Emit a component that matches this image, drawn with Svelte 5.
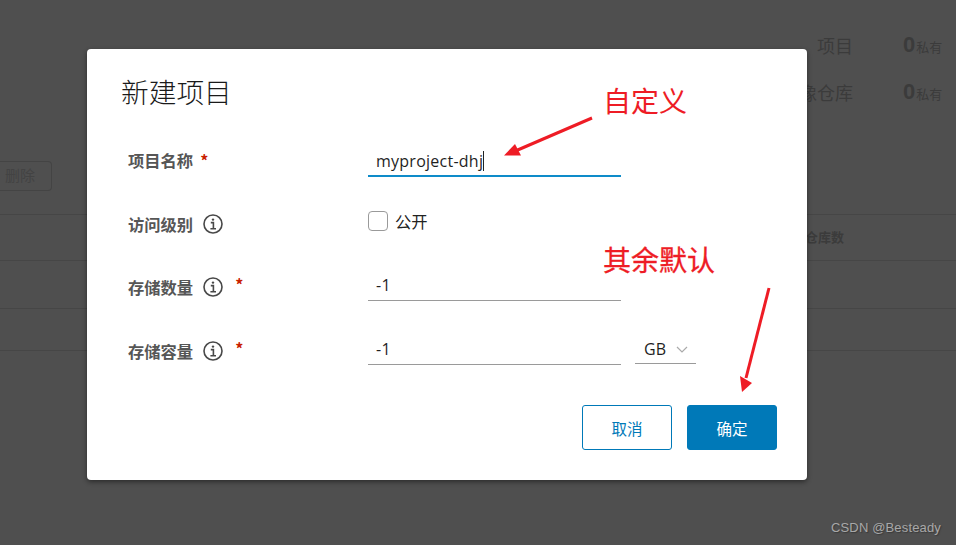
<script>
	const fields = [
		{ label: '存储数量', value: '-1' },
		{ label: '存储容量', value: '-1', unit: 'GB' }
	];
</script>

{#snippet info()}
	<svg class="info" viewBox="0 0 20 20" aria-hidden="true">
		<circle cx="10" cy="10" r="9" />
		<path d="M7.8 8.6H10.4V14.6M7.4 14.8H13" />
		<circle class="dot" cx="10" cy="5.6" r="1.2" />
	</svg>
{/snippet}

<div class="page">
	<div class="stats">
		<div class="stat"><span class="stat-name">项目</span><span class="stat-num">0<small>私有</small></span></div>
		<div class="stat"><span class="stat-name">镜像仓库</span><span class="stat-num">0<small>私有</small></span></div>
	</div>
	<div class="toolbar"><span class="ghost">删除</span></div>
	<div class="table">
		<div class="row head"><span>镜像仓库数</span></div>
		<div class="row tall"></div>
		<div class="row"></div>
	</div>
</div>

<div class="modal">
	<h2>新建项目</h2>
	<form class="form">
		<div class="field first">
			<div class="label">项目名称<span class="req">*</span></div>
			<div class="input active">myproject-dhj<i class="caret"></i></div>
		</div>
		<div class="field check-row">
			<div class="label">访问级别{@render info()}</div>
			<label class="check"><span class="box"></span>公开</label>
		</div>
		{#each fields as f}
			<div class="field">
				<div class="label">{f.label}{@render info()}<span class="req far">*</span></div>
				<div class="input">{f.value}</div>
				{#if f.unit}
					<div class="select">
						{f.unit}
						<svg viewBox="0 0 12 7" aria-hidden="true"><path d="M1 1L6 6L11 1" /></svg>
					</div>
				{/if}
			</div>
		{/each}
	</form>
	<div class="actions">
		<button type="button" class="btn outline">取消</button>
		<button type="button" class="btn solid">确定</button>
	</div>
</div>

<span class="note note-a">自定义</span>
<span class="note note-b">其余默认</span>
<svg class="arrows" viewBox="0 0 956 545" aria-hidden="true">
	<path class="shaft" d="M592 118L513 152" />
	<path class="head-tip" d="M504 155.5L515 144L521 155.5Z" />
	<path class="shaft" d="M769 288L746 378" />
	<path class="head-tip" d="M742 392L740 376L752 383Z" />
</svg>
<span class="mark">CSDN @Besteady</span>

<style>
	:global(body) {
		margin: 0;
		background: #4f4f4f;
		overflow: hidden;
	}

	.page {
		height: 545px;
		overflow: hidden;
		background: #4f4f4f;
		color: #3b3b3b;
		font-family: 'Liberation Sans', 'Noto Sans CJK SC', sans-serif;
	}

	.stats {
		display: flex;
		flex-direction: column;
		align-items: flex-end;
		gap: 19px;
		padding: 33px 14px 0 0;
	}

	.stat {
		display: flex;
		align-items: center;
		height: 28px;
		gap: 50px;
	}

	.stat-name {
		font-size: 18px;
		line-height: 28px;
	}

	.stat-num {
		display: flex;
		align-items: baseline;
		width: 39px;
		padding-bottom: 5px;
		font-size: 22px;
		font-weight: 700;
		white-space: nowrap;
	}

	.stat-num small {
		margin-left: 1px;
		font-size: 13px;
		font-weight: 400;
	}

	.toolbar {
		display: flex;
		margin-top: 53px;
	}

	.ghost {
		box-sizing: border-box;
		width: 52px;
		height: 30px;
		padding-left: 5px;
		border: 1px solid #444;
		border-left: 0;
		border-radius: 0 4px 4px 0;
		font-size: 15px;
		line-height: 28px;
		color: #434343;
	}

	.table {
		margin-top: 23px;
	}

	.row {
		box-sizing: border-box;
		height: 46px;
		border-top: 1px solid #464646;
		display: flex;
		align-items: center;
		justify-content: flex-end;
		padding-right: 112px;
		font-size: 13px;
		font-weight: 700;
	}

	.row.head {
		padding-bottom: 3px;
	}

	.row.tall {
		height: 48px;
	}

	.row:last-child {
		height: 43px;
		border-bottom: 1px solid #464646;
	}

	.modal {
		position: absolute;
		left: 87px;
		top: 49px;
		box-sizing: border-box;
		width: 720px;
		height: 431px;
		padding: 22px 30px 30px 34px;
		background: #fff;
		border-radius: 4px;
		box-shadow: 0 2px 5px rgba(0, 0, 0, 0.45);
		font-family: 'Noto Sans CJK SC', sans-serif;
		color: #333;
	}

	h2 {
		margin: 0;
		font-size: 27.7px;
		line-height: 40px;
		font-weight: 300;
		color: #1a1a1a;
	}

	.form {
		display: flex;
		flex-direction: column;
		margin-top: 26px;
		padding-left: 7px;
	}

	.field {
		display: flex;
		align-items: flex-end;
		height: 40px;
		margin-top: 24px;
	}

	.field.first {
		margin-top: 0;
	}

	.field.check-row {
		box-sizing: border-box;
		align-items: flex-start;
		margin-top: 20px;
		padding-top: 14px;
	}

	.label {
		display: flex;
		align-items: center;
		width: 240px;
		height: 28px;
		font-size: 16.3px;
		font-weight: 700;
		color: #565656;
	}

	.first .label {
		height: 34px;
	}

	.check-row .label {
		height: 26px;
	}

	.req {
		margin-left: 7px;
		color: #c92100;
		font-size: 16px;
		font-weight: 700;
		transform: translateY(-3px);
	}

	.first .req {
		transform: none;
	}

	.req.far {
		margin-left: 12px;
	}

	.info {
		width: 20px;
		height: 20px;
		margin-left: 10px;
		flex: none;
	}

	.info circle {
		fill: none;
		stroke: #484848;
		stroke-width: 1.6;
	}

	.info circle.dot {
		fill: #484848;
		stroke: none;
	}

	.info path {
		fill: none;
		stroke: #484848;
		stroke-width: 1.6;
	}

	.input {
		box-sizing: border-box;
		display: flex;
		align-items: center;
		width: 253px;
		height: 30px;
		padding-left: 8px;
		padding-bottom: 1px;
		border-bottom: 1px solid #9a9a9a;
		font-family: 'Open Sans', sans-serif;
		font-size: 16px;
		letter-spacing: 0.25px;
		color: #1f1f1f;
	}

	.input.active {
		padding-bottom: 0;
		border-bottom: 2px solid #0e8bc9;
	}

	.caret {
		width: 1px;
		height: 20px;
		background: #222;
	}

	.check {
		display: flex;
		align-items: center;
		gap: 7px;
		height: 20px;
		font-size: 16.3px;
		color: #222;
	}

	.box {
		box-sizing: border-box;
		width: 20px;
		height: 20px;
		border: 1px solid #9a9a9a;
		border-radius: 4px;
	}

	.select {
		box-sizing: border-box;
		display: flex;
		align-items: center;
		gap: 10px;
		width: 61px;
		height: 29px;
		margin-left: 14px;
		margin-bottom: 1px;
		padding-left: 9px;
		border-bottom: 1px solid #9a9a9a;
		font-family: 'Open Sans', sans-serif;
		font-size: 16px;
		color: #1f1f1f;
	}

	.select svg {
		width: 12px;
		height: 7px;
		fill: none;
		stroke: #aaa;
		stroke-width: 1.2;
	}

	.actions {
		display: flex;
		justify-content: flex-end;
		gap: 15px;
		margin-top: 40px;
	}

	.btn {
		box-sizing: border-box;
		width: 90px;
		height: 45px;
		border-radius: 3px;
		font-family: 'Noto Sans CJK SC', sans-serif;
		font-size: 15.5px;
		padding: 0;
	}

	.outline {
		background: #fff;
		border: 1px solid #0079b8;
		color: #0079b8;
	}

	.solid {
		background: #0079b8;
		border: 1px solid #0079b8;
		color: #fff;
	}

	.note {
		position: absolute;
		font-family: 'Noto Sans CJK SC', sans-serif;
		color: #ee1c25;
		line-height: 1;
		white-space: nowrap;
		font-size: 28px;
	}

	.note-a {
		left: 603px;
		top: 86px;
	}

	.note-b {
		left: 603px;
		top: 245px;
		-webkit-text-stroke: 0.3px #ee1c25;
	}

	.arrows {
		position: absolute;
		left: 0;
		top: 0;
		width: 956px;
		height: 545px;
		pointer-events: none;
	}

	.shaft {
		fill: none;
		stroke: #ee1c25;
		stroke-width: 3;
	}

	.head-tip {
		fill: #ee1c25;
	}

	.mark {
		position: absolute;
		left: 831px;
		top: 520px;
		font-family: 'Liberation Sans', sans-serif;
		font-size: 13px;
		letter-spacing: 0.15px;
		line-height: 16px;
		color: #a8a8a8;
		text-shadow: 1px 1px 1px #3a3a3a;
		white-space: nowrap;
	}
</style>
